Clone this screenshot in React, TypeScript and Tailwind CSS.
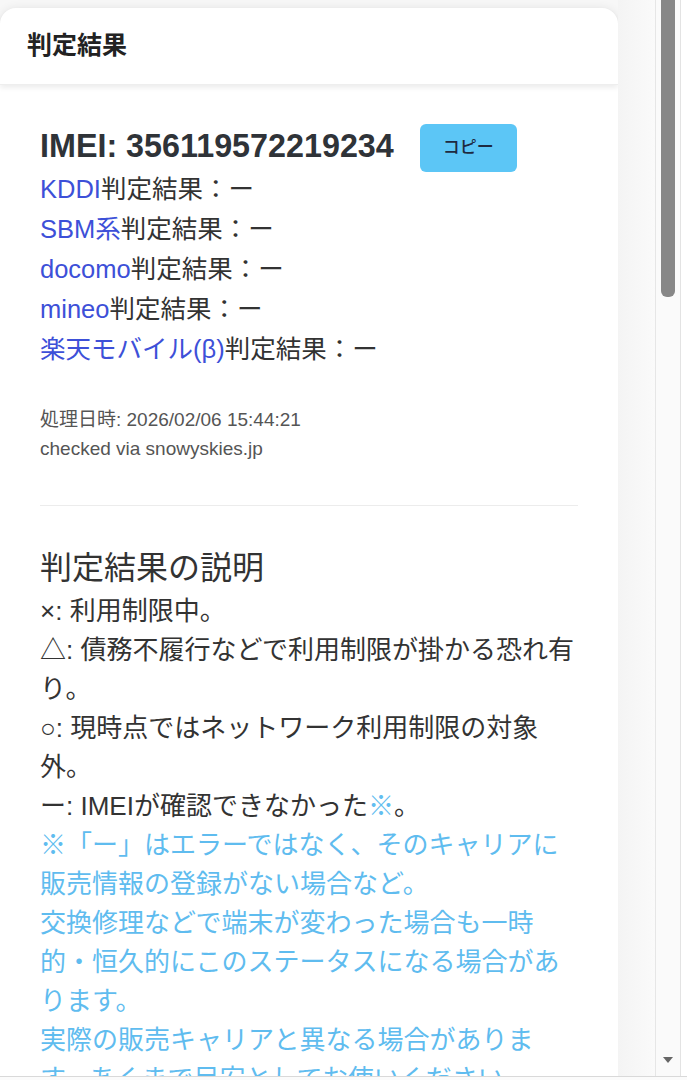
import React from 'react';

const carriers = [
  { name: 'KDDI', result: 'ー' },
  { name: 'SBM系', result: 'ー' },
  { name: 'docomo', result: 'ー' },
  { name: 'mineo', result: 'ー' },
  { name: '楽天モバイル(β)', result: 'ー' },
];

export default function App() {
  return (
    <div
      className="w-[687px] h-[1080px] overflow-hidden flex flex-col bg-[#f7f7f7] text-[#333]"
      style={{ fontFamily: '"Liberation Sans", "Noto Sans CJK JP", sans-serif' }}
    >
      <div className="flex h-[1076px]">
        {/* Result card */}
        <div className="w-[618px] pt-2 shrink-0">
          <div className="h-full bg-white rounded-t-2xl shadow-[0_0_10px_rgba(0,0,0,0.08)]">
            <div className="h-[77px] flex items-center px-[27px] rounded-t-2xl shadow-[0_3px_5px_rgba(0,0,0,0.07)] border-b border-[#eee]">
              <h2 className="text-[25px] font-bold text-[#222]">判定結果</h2>
            </div>

            <div className="px-10">
              <div className="mt-[39px] h-[45px] flex items-start">
                <h3 className="text-[32.3px] leading-[45px] font-bold text-[#2f3338]">IMEI: 356119572219234</h3>
                <button className="ml-[26px] h-[48px] w-[97px] rounded-md bg-[#5cc6f6] text-[17px] font-medium text-[#1e2a40]">
                  コピー
                </button>
              </div>

              <div className="text-[25.5px] leading-[40px]">
                {carriers.map((c) => (
                  <div key={c.name}>
                    <a className="text-[#3d50d8]">{c.name}</a>判定結果：{c.result}
                  </div>
                ))}
              </div>

              <div className="mt-[36px] text-[19px] leading-[29px] text-[#555]">
                <div>処理日時: 2026/02/06 15:44:21</div>
                <div>checked via snowyskies.jp</div>
              </div>

              <div className="mt-[42px] border-t border-[#ececec]" />

              <h3 className="mt-[40px] text-[32px] leading-[44px]">判定結果の説明</h3>
              <div className="mt-[2px] text-[26px] leading-[39px]">
                <div>×: 利用制限中。</div>
                <div>△: 債務不履行などで利用制限が掛かる恐れ有り。</div>
                <div>○: 現時点ではネットワーク利用制限の対象外。</div>
                <div>
                  ー: IMEIが確認できなかった<span className="text-[#62bdf0]">※</span>。
                </div>
                <div className="text-[#5fbcef]">
                  <div>※「ー」はエラーではなく、そのキャリアに販売情報の登録がない場合など。</div>
                  <div>交換修理などで端末が変わった場合も一時的・恒久的にこのステータスになる場合があります。</div>
                  <div>実際の販売キャリアと異なる場合があります。あくまで目安としてお使いください。</div>
                </div>
              </div>
            </div>
          </div>
        </div>

        {/* Window scrollbar */}
        <div className="flex-1 flex">
          <div className="w-[37px] bg-gradient-to-r from-[#f4f4f4] to-[#fafafa]" />
          <div className="w-[25px] flex flex-col items-center justify-between bg-[#fafafa] border-l border-[#e6e6e6] pb-3">
            <div className="w-[14px] h-[297px] bg-[#878787] rounded-b-md" />
            <svg width="12" height="8" viewBox="0 0 12 8">
              <path d="M1 1h10L6 7z" fill="#666" />
            </svg>
          </div>
          <div className="flex-1 bg-white border-l border-[#e3e3e3]" />
        </div>
      </div>
      <div className="flex-1 bg-[#fbfbfb] border-t border-[#d9d9d9]" />
    </div>
  );
}
